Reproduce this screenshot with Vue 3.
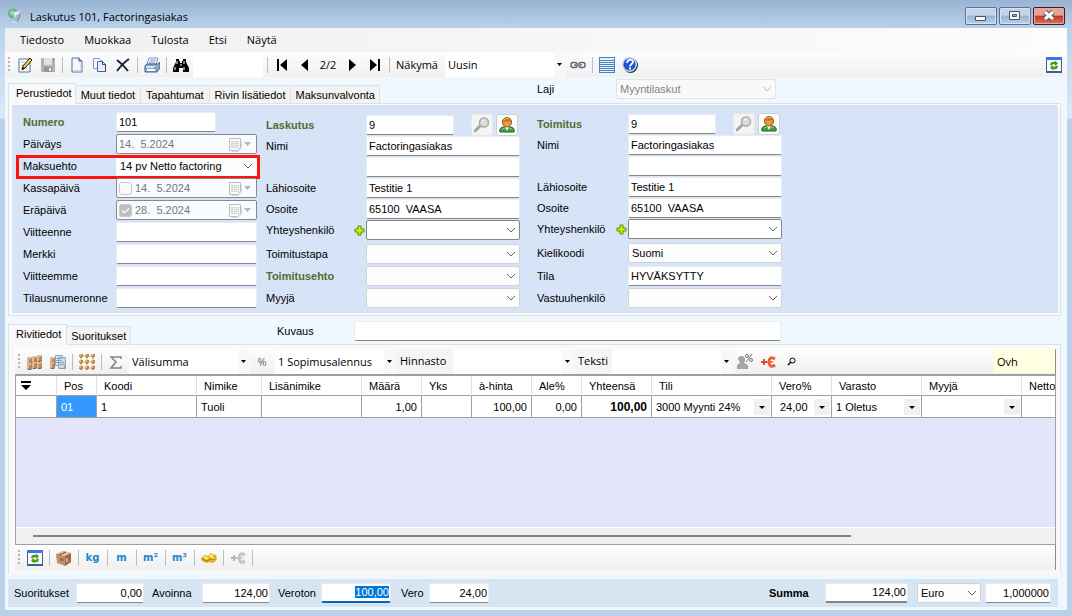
<script setup>
import { ref, onMounted } from 'vue'

const page = '<path d="M3 1h7l3 3v11H3z" fill="#f4f8fd" stroke="#55739b"/><path d="M10 1v3h3" fill="#c7d6ea" stroke="#2c4870"/><path d="M4 14h8V6" fill="none" stroke="#b9cbe3"/>'
const refresh = '<path d="M0 0h16v16H0z" fill="#3d5f94"/><path d="M0 0h16v3H0z" fill="#3c76e6"/><path d="M1 3h14v11H1z" fill="#f7fbff"/><path d="M4 8c0-3 3-4 5-3V3.500l3 3-3 2.500V7.500C7 7 6 7 6 8.500zM12 9c0 3-3 4-5 3v1.500l-3-3L7 8v1.500c2 .5 3 0 3-1z" fill="#4f9a08"/>'
const barrel = (x, y) => `<path d="M${x} ${y + 1}l2-1h2l1 1v5l-2 1h-2l-1-1z" fill="#b88762"/><path d="M${x} ${y + 1}l2-1h2v2h-2v4h-1l-1-1z" fill="#dfb992"/><path d="M${x + 1} ${y + 6}h3l1-1v1l-2 1h-2z" fill="#80604c"/>`
const knot = (x, y) => `<path d="M${x} ${y}h4v3h-1v1h-2v-1h-1z" fill="#b88864"/><path d="M${x} ${y}h2v2h-2z" fill="#e0b890"/>`
const icons = {
  app: '<path d="M1 3l5-3 4 2 1 5-3 4-5-1-2-3z" fill="#68b28d"/><path d="M2 4l4-2 2 3-3 3z" fill="#9cd4b5"/><path d="M7 4l7-1v6l-4 6-5-1 2-2z" fill="#e6ebef"/><path d="M9 7l4-1v3l-3 5-4-1z" fill="#a9b5bf"/><path d="M13 4v5l-3 5" fill="none" stroke="#6e7b85"/>',
  edit: '<path d="M2 2h11v13H2z" fill="#fff" stroke="#55739b"/><path d="M4 5h4M4 8h3M4 11h6" stroke="#9fb5d3"/><path d="M13 1l2 2-7 8-3 2 1-4z" fill="#ffd42a" stroke="#1a1a1a"/><path d="M5 13l1-3 2 1z" fill="#111"/>',
  save: '<path d="M1 1h14v14H2l-1-1z" fill="#b2b2b2"/><path d="M4 1h8v7H4z" fill="#e2e2e2"/><path d="M4 10h8v5H4z" fill="#939393"/><path d="M9 11h2v3H9z" fill="#ececec"/><path d="M13 2h1v1h-1z" fill="#777"/>',
  page,
  copy: '<path d="M1.500 1.500h6l3 3v7h-9z" fill="#f4f8fd" stroke="#7f97b8"/><path d="M5.500 4.500h5l3 3v7h-8z" fill="#e7eff9" stroke="#48658f"/><path d="M10.500 4.500v3h3v7" fill="none" stroke="#2c4870"/>',
  cross: '<path d="M2 3c4 3 8 7 11 11M14 2C9 5 5 10 2 14" fill="none" stroke="#1c1c48" stroke-width="2"/>',
  print: '<path d="M5 1h9l-2 6H3z" fill="#fff" stroke="#7d93b3"/><path d="M6 3h6M5 5h6" stroke="#6f95ce"/><path d="M3 7h11l2-2v6l-3 4H1V9z" fill="#8ca5c9" stroke="#435f8c"/><path d="M2 9h10v2H2z" fill="#d9e5f5"/><path d="M3 13h8" stroke="#fff" stroke-width="2"/><path d="M10 10h2v1h-2z" fill="#48a848"/>',
  binoc: '<path d="M3 2h3v2h1v2h2V4h1V2h3v3l3 6v4h-6v-4H6v4H0v-4l3-6z" fill="#000"/><path d="M4 4v3M2 10v3M11 4v3M11 10v3M7 8h2" stroke="#fff"/>',
  first: '<path d="M3 2h2v12H3zM13 2v12L6 8z" fill="#000"/>',
  prev: '<path d="M11 2v12L4 8z" fill="#000"/>',
  next: '<path d="M5 2v12l7-6z" fill="#000"/>',
  last: '<path d="M11 2h2v12h-2zM3 2v12l7-6z" fill="#000"/>',
  chain: '<rect x="1" y="5.500" width="6" height="5" rx="2" fill="none" stroke="#65656d" stroke-width="1.500"/><rect x="9" y="5.500" width="6" height="5" rx="2" fill="none" stroke="#65656d" stroke-width="1.500"/><path d="M4 8h8" stroke="#8b8b93" stroke-width="2"/>',
  list: '<path d="M0 0h16v16H0z" fill="#4c82bd"/><path d="M1 1h14v2H1zM1 4h14v1H1zM1 6h14v1H1zM1 8h14v1H1zM1 10h14v1H1zM1 12h14v1H1zM1 14h14v1H1z" fill="#e3f0fd"/>',
  help: '<circle cx="8.500" cy="8.500" r="7.500" fill="#333c58"/><circle cx="7.500" cy="7.500" r="7.500" fill="#c3d4f3"/><circle cx="7.500" cy="7.500" r="6" fill="#1f55c8"/><path d="M5 6c0-4 6-4 6-1 0 2-3 2-3 4.500" fill="none" stroke="#fff" stroke-width="1.800"/><path d="M7 10.500h2v2H7z" fill="#fff"/>',
  refresh,
  lens: '<path d="M1 14l6-6" stroke="#a5a5a5" stroke-width="3" stroke-linecap="round"/><circle cx="10" cy="5.500" r="4.500" fill="#dcdcdc" stroke="#a9a9a9" stroke-width="1.500"/><path d="M8 4c1-1 2-1 3-1" stroke="#fff" fill="none"/>',
  person: '<path d="M1 15c-1-3 1-5 4-5h6c3 0 5 2 4 5z" fill="#3f9f3c" stroke="#1f6428"/><path d="M3 12l3-1M13 12l-3-1" stroke="#86cf78"/><path d="M6 10l2 4 2-4z" fill="#fff"/><path d="M3.500 5c0-6 9-6 9 0 0 3-2 5-4.500 5S3.500 8 3.500 5z" fill="#ee9a3a" stroke="#8e5420"/><path d="M4 4c1-4 7-4 8 0-3 1-6 1-8 0z" fill="#c9701c"/><path d="M5 3c2-2 4-2 5-1" stroke="#f5bf7c" fill="none"/>',
  plus: '<path d="M4 1h3v3h3v3H7v3H4V7H1V4h3z" fill="#c5f500" stroke="#5d8b00"/>',
  barrels: barrel(10, 1) + barrel(5, 2) + barrel(0, 3) + barrel(10, 8) + barrel(5, 8) + barrel(0, 9),
  sheets: '<path d="M5.500 1.500h7v10h-7z" fill="#dce7ee" stroke="#8ba7b8"/><path d="M8.500 3.500h7v11h-7z" fill="#cbdbe5" stroke="#8ba7b8"/><path d="M6 4.500h6M6 6.500h6M6 8.500h8M9 10.500h6" stroke="#8ba7b8"/><path d="M12 14.500h3M14.500 12v3" stroke="#d86ad8"/>' + barrel(0, 3) + barrel(0, 8),
  network: '<path d="M2 2h12M2 8h12M2 14h12M2 2v12M8 2v12M14 2v12" stroke="#f0c414" fill="none"/>' + [0, 6, 12].map(y => [0, 6, 12].map(x => knot(x, y)).join('')).join(''),
  sigma: '<path d="M13 5V3H3l5 5-5 6h10v-2" fill="none" stroke="#828282" stroke-width="1.500"/>',
  discount: '<path d="M1 5c0-4 7-4 7 0v2L7 9l4 2v4H0v-4l3-2z" fill="#a5a5a5"/><circle cx="10" cy="2" r="1.500" fill="none" stroke="#777"/><circle cx="14" cy="6" r="1.500" fill="none" stroke="#777"/><path d="M15 0l-6 8" stroke="#777"/>',
  euro: '<path d="M1 8h6M4 5v6" stroke="#e04a24" stroke-width="2"/><path d="M15 5c-4-3-6 0-6 3s2 6 6 3" fill="none" stroke="#e8623c" stroke-width="3"/><path d="M7 8h6" stroke="#e8623c" stroke-width="1.500"/>',
  euroOff: '<path d="M1 8h6M4 5v6" stroke="#b5b5b5" stroke-width="2"/><path d="M15 5c-4-3-6 0-6 3s2 6 6 3" fill="none" stroke="#c4c4c4" stroke-width="3"/><path d="M7 8h6" stroke="#c4c4c4" stroke-width="1.500"/>',
  find: '<circle cx="9.500" cy="6.500" r="2.500" fill="none" stroke="#000"/><path d="M8 8l-3 3" stroke="#000" stroke-width="1.500"/>',
  box: '<path d="M0 4l7-3 8 2v9l-6 4-8-3z" fill="#c48f66"/><path d="M0 4l7-3 8 2-6 3z" fill="#e8c6a0"/><path d="M9 6l6-3v9l-6 4z" fill="#9c6a48"/><path d="M3 5l7-3M5 8v3M7 9v2" stroke="#6b4630"/><path d="M11 8v4" stroke="#f5e9d6"/>',
  coins: '<path d="M0 8l4-3 3 1 2-3 6 2 1 4-4 4-4-1-2 1-5-2z" fill="#e0ac1c"/><path d="M2 7l3-1 3 2-3 2zM8 4l5 1-1 3-4-1zM9 9l3-1 2 1-2 2z" fill="#ffe868"/><path d="M1 9l5 2 3-2 5 1" stroke="#a47c10" fill="none"/>',
  menu: '<path d="M3 3h10v2H3zM3 7h10l-5 5z" fill="#000"/>',
  calendar: '<path d="M.5 1.500h11v9l-3 3h-8z" fill="#fbfbfb" stroke="#bdbdbd"/><path d="M2 4h8v7H2z" fill="#cfcfcf"/><path d="M2 5.500h8M2 7.500h8M2 9.500h8M4.500 4v7M6.500 4v7M8.500 4v7" stroke="#f6f6f6" stroke-width=".6"/><path d="M12.500 4v7l-3 3.500H3" fill="none" stroke="#d8d8d8"/>'
}

const menus = ['Tiedosto', 'Muokkaa', 'Tulosta', 'Etsi', 'Näytä']
const mainTabs = ['Perustiedot', 'Muut tiedot', 'Tapahtumat', 'Rivin lisätiedot', 'Maksunvalvonta']
const tools = [
  ['edit', 'Muokkaa'], ['save', 'Tallenna'], null, ['page', 'Uusi'], ['copy', 'Kopioi'], ['cross', 'Poista'], null,
  ['print', 'Tulosta'], null, ['binoc', 'Etsi']
]

const columns = [
  {
    name: 'basic',
    fields: [
      { label: 'Numero', kind: 'text', value: '101', strong: true, short: true },
      { label: 'Päiväys', kind: 'date', value: '14.  5.2024' },
      { label: 'Maksuehto', kind: 'combo', value: '14 pv Netto factoring', marked: true },
      { label: 'Kassapäivä', kind: 'date', value: '14.  5.2024', check: true, checked: false },
      { label: 'Eräpäivä', kind: 'date', value: '28.  5.2024', check: true, checked: true },
      { label: 'Viitteenne', kind: 'text', value: '' },
      { label: 'Merkki', kind: 'text', value: '' },
      { label: 'Viitteemme', kind: 'text', value: '' },
      { label: 'Tilausnumeronne', kind: 'text', value: '' }
    ]
  },
  {
    name: 'billing',
    fields: [
      { label: 'Laskutus', kind: 'text', value: '9', strong: true, party: true },
      { label: 'Nimi', kind: 'text', value: 'Factoringasiakas' },
      { label: '', aria: 'Nimi 2', kind: 'text', value: '' },
      { label: 'Lähiosoite', kind: 'text', value: 'Testitie 1' },
      { label: 'Osoite', kind: 'text', value: '65100  VAASA' },
      { label: 'Yhteyshenkilö', kind: 'combo', value: '', add: true, dark: true },
      { label: 'Toimitustapa', kind: 'combo', value: '', lower: true },
      { label: 'Toimitusehto', kind: 'combo', value: '', strong: true },
      { label: 'Myyjä', kind: 'combo', value: '' }
    ]
  },
  {
    name: 'delivery',
    fields: [
      { label: 'Toimitus', kind: 'text', value: '9', strong: true, party: true },
      { label: 'Nimi', kind: 'text', value: 'Factoringasiakas' },
      { label: '', aria: 'Nimi 2', kind: 'text', value: '' },
      { label: 'Lähiosoite', kind: 'text', value: 'Testitie 1' },
      { label: 'Osoite', kind: 'text', value: '65100  VAASA' },
      { label: 'Yhteyshenkilö', kind: 'combo', value: '', add: true, dark: true },
      { label: 'Kielikoodi', kind: 'combo', value: 'Suomi', lower: true },
      { label: 'Tila', kind: 'text', value: 'HYVÄKSYTTY' },
      { label: 'Vastuuhenkilö', kind: 'combo', value: '' }
    ]
  }
]

const gridColumns = [
  { title: 'Pos', cls: 'w40', value: '01', selected: true },
  { title: 'Koodi', cls: 'w100', value: '1' },
  { title: 'Nimike', cls: 'w65', value: 'Tuoli' },
  { title: 'Lisänimike', cls: 'w100', value: '' },
  { title: 'Määrä', cls: 'w60', value: '1,00', right: true },
  { title: 'Yks', cls: 'w50', value: '' },
  { title: 'à-hinta', cls: 'w60', value: '100,00', right: true },
  { title: 'Ale%', cls: 'w50', value: '0,00', right: true },
  { title: 'Yhteensä', cls: 'w70', value: '100,00', right: true, bold: true },
  { title: 'Tili', cls: 'w120', value: '3000 Myynti 24%', drop: true },
  { title: 'Vero%', cls: 'w60', value: '24,00', drop: true, indent: true },
  { title: 'Varasto', cls: 'w90', value: '1 Oletus', drop: true },
  { title: 'Myyjä', cls: 'w100', value: '', drop: true },
  { title: 'Nettohinta', cls: 'rest', value: '' }
]

const units = [
  { icon: 'refresh', label: 'Päivitä' },
  { icon: 'box', label: 'Paketti' },
  { text: 'kg' },
  { text: 'm' },
  { text: 'm²' },
  { text: 'm³' },
  { icon: 'coins', label: 'Rahat' },
  { icon: 'euroOff', label: 'Lisää euro' }
]

const untaxed = ref(null)
onMounted(() => {
  untaxed.value.focus()
  untaxed.value.select()
})
</script>

<template>
  <div class="window">
    <header class="titlebar">
      <svg class="ico" viewBox="0 0 16 16" v-html="icons.app"></svg>
      <h1>Laskutus 101, Factoringasiakas</h1>
      <button class="wbtn" aria-label="Pienennä"><svg viewBox="0 0 30 16"><path d="M9.500 8.500h10v4h-10z" fill="#f8f8f8" stroke="#4a5462" /></svg></button>
      <button class="wbtn" aria-label="Suurenna"><svg viewBox="0 0 30 16"><path d="M9.500 3.500h10v8h-10z" fill="#f8f8f8" stroke="#4a5462" /><path d="M12.500 6.500h4v2h-4z" fill="#93aeca" stroke="#4a5462" /></svg></button>
      <button class="wbtn close" aria-label="Sulje"><svg viewBox="0 0 30 16"><path d="M11 4l8 7M19 4l-8 7" stroke="#53474b" stroke-width="5" /><path d="M11 4l8 7M19 4l-8 7" stroke="#fff" stroke-width="3" /></svg></button>
    </header>

    <main class="body">
      <nav class="menubar">
        <button v-for="m in menus" :key="m">{{ m }}</button>
      </nav>

      <div class="toolbar top">
        <i class="grip"></i>
        <template v-for="(t, i) in tools" :key="i">
          <button v-if="t" class="tool" :aria-label="t[1]"><svg class="ico" viewBox="0 0 16 16" v-html="icons[t[0]]"></svg></button>
          <i v-else class="sep"></i>
        </template>
        <input class="quick" aria-label="Hakusana">
        <i class="sep"></i>
        <button class="tool" aria-label="Ensimmäinen"><svg class="ico" viewBox="0 0 16 16" v-html="icons.first"></svg></button>
        <button class="tool" aria-label="Edellinen"><svg class="ico" viewBox="0 0 16 16" v-html="icons.prev"></svg></button>
        <span class="count">2/2</span>
        <button class="tool" aria-label="Seuraava"><svg class="ico" viewBox="0 0 16 16" v-html="icons.next"></svg></button>
        <button class="tool" aria-label="Viimeinen"><svg class="ico" viewBox="0 0 16 16" v-html="icons.last"></svg></button>
        <i class="sep"></i>
        <label class="view" for="view">Näkymä</label>
        <span class="flat">
          <select id="view"><option>Uusin</option></select>
          <svg class="tri" viewBox="0 0 5 3"><path d="M0 0h5L2.500 3z" /></svg>
        </span>
        <button class="tool" aria-label="Linkki"><svg class="ico" viewBox="0 0 16 16" v-html="icons.chain"></svg></button>
        <i class="sep"></i>
        <button class="tool" aria-label="Luettelo"><svg class="ico" viewBox="0 0 16 16" v-html="icons.list"></svg></button>
        <button class="tool" aria-label="Ohje"><svg class="ico" viewBox="0 0 16 16" v-html="icons.help"></svg></button>
        <button class="tool end" aria-label="Päivitä"><svg class="ico" viewBox="0 0 16 16" v-html="icons.refresh"></svg></button>
      </div>

      <div class="tabrow">
        <div class="tabs" role="tablist">
          <button v-for="(t, i) in mainTabs" :key="t" role="tab" :class="{ on: i === 0 }">{{ t }}</button>
        </div>
        <div class="aside kind">
          <label for="kind">Laji</label>
          <span class="combo off">
            <select id="kind" disabled><option>Myyntilaskut</option></select>
            <svg class="chev" viewBox="0 0 10 6"><path d="M1 1l4 4 4-4" /></svg>
          </span>
        </div>
      </div>

      <section class="pane">
        <form class="form" @submit.prevent>
          <div v-for="c in columns" :key="c.name" class="col" :class="c.name">
            <div v-for="(f, i) in c.fields" :key="i" class="row" :class="{ marked: f.marked, lower: f.lower }">
              <label :for="c.name + i" :class="{ strong: f.strong }">{{ f.label }}</label>
              <button v-if="f.add" class="add" aria-label="Lisää yhteyshenkilö"><svg viewBox="0 0 11 11" v-html="icons.plus"></svg></button>

              <span v-if="f.kind === 'combo'" class="combo" :class="{ dark: f.dark }">
                <select :id="c.name + i"><option>{{ f.value }}</option></select>
                <svg class="chev" viewBox="0 0 10 6"><path d="M1 1l4 4 4-4" /></svg>
              </span>
              <span v-else-if="f.kind === 'date'" class="date">
                <span v-if="f.check" class="tick">
                  <input type="checkbox" disabled :checked="f.checked" :aria-label="f.label + ' käytössä'">
                  <svg v-if="f.checked" viewBox="0 0 13 13"><path d="M3 6.500l2.500 2.500L10 4.500" fill="none" stroke="#fff" stroke-width="1.200" /></svg>
                </span>
                <input :id="c.name + i" type="text" disabled :value="f.value">
                <svg class="cal" viewBox="0 0 13 15" v-html="icons.calendar"></svg>
                <svg class="drop" viewBox="0 0 7 4"><path d="M0 0h7L3.500 4z" /></svg>
              </span>
              <span v-else-if="f.party" class="party">
                <input :id="c.name + i" class="box" type="text" :value="f.value">
                <button class="sq dim" aria-label="Hae"><svg viewBox="0 0 16 16" v-html="icons.lens"></svg></button>
                <button class="sq" aria-label="Asiakas"><svg viewBox="0 0 16 16" v-html="icons.person"></svg></button>
              </span>
              <input v-else :id="c.name + i" class="box" :class="{ short: f.short }" type="text" :value="f.value" :aria-label="f.aria || f.label">
            </div>
          </div>
        </form>
      </section>

      <div class="tabrow second">
        <div class="tabs" role="tablist">
          <button role="tab" class="on">Rivitiedot</button>
          <button role="tab">Suoritukset</button>
        </div>
        <div class="aside desc">
          <label for="desc">Kuvaus</label>
          <input id="desc" class="box" type="text">
        </div>
      </div>

      <section class="pane lines">
        <div class="toolbar inner">
          <i class="grip"></i>
          <button class="tool" aria-label="Tuotteet"><svg class="ico" viewBox="0 0 16 16" v-html="icons.barrels"></svg></button>
          <button class="tool" aria-label="Tuotelista"><svg class="ico" viewBox="0 0 16 16" v-html="icons.sheets"></svg></button>
          <i class="sep"></i>
          <button class="tool" aria-label="Rakenne"><svg class="ico" viewBox="0 0 16 16" v-html="icons.network"></svg></button>
          <i class="sep"></i>
          <button class="tool" aria-label="Summa"><svg class="ico" viewBox="0 0 16 16" v-html="icons.sigma"></svg></button>
          <span class="flat">
            <select aria-label="Välisumma"><option>Välisumma</option></select>
            <svg class="tri" viewBox="0 0 5 3"><path d="M0 0h5L2.500 3z" /></svg>
          </span>
          <label class="pct" for="disc">%</label>
          <span class="flat">
            <select id="disc"><option>1 Sopimusalennus</option></select>
            <svg class="tri" viewBox="0 0 5 3"><path d="M0 0h5L2.500 3z" /></svg>
          </span>
          <label class="tag wide" for="prices">Hinnasto</label>
          <span class="flat">
            <select id="prices"><option></option></select>
            <svg class="tri" viewBox="0 0 5 3"><path d="M0 0h5L2.500 3z" /></svg>
          </span>
          <label class="tag" for="note">Teksti</label>
          <span class="flat">
            <select id="note"><option></option></select>
            <svg class="tri" viewBox="0 0 5 3"><path d="M0 0h5L2.500 3z" /></svg>
          </span>
          <button class="tool" aria-label="Asiakasalennus"><svg class="ico" viewBox="0 0 16 16" v-html="icons.discount"></svg></button>
          <button class="tool" aria-label="Lisää euro"><svg class="ico" viewBox="0 0 16 16" v-html="icons.euro"></svg></button>
          <button class="tool" aria-label="Haku"><svg class="ico" viewBox="0 0 16 16" v-html="icons.find"></svg></button>
          <span class="ovh">Ovh</span>
        </div>

        <div class="gridbox">
          <table>
            <thead>
              <tr>
                <th class="w41"><svg class="gm" viewBox="0 0 16 16" v-html="icons.menu"></svg></th>
                <th v-for="g in gridColumns" :key="g.title" :class="g.cls">{{ g.title }}</th>
              </tr>
            </thead>
            <tbody>
              <tr>
                <td></td>
                <td v-for="g in gridColumns" :key="g.title" :class="{ right: g.right, bold: g.bold, sel: g.selected }">
                  <span v-if="g.drop" class="cellcombo" :class="{ indent: g.indent }">
                    <select :aria-label="g.title"><option>{{ g.value }}</option></select>
                    <svg class="arrow" viewBox="0 0 16 16"><path d="M5 7h6l-3 3z" /></svg>
                  </span>
                  <template v-else>{{ g.value }}</template>
                </td>
              </tr>
            </tbody>
          </table>
          <div class="scroll"><div class="thumb"></div></div>
        </div>

        <div class="toolbar inner unit">
          <i class="grip"></i>
          <template v-for="(u, i) in units" :key="i">
            <button class="tool" :aria-label="u.label || u.text">
              <svg v-if="u.icon" class="ico" viewBox="0 0 16 16" v-html="icons[u.icon]"></svg>
              <b v-else>{{ u.text }}</b>
            </button>
            <i class="sep"></i>
          </template>
        </div>
      </section>

      <footer class="totals">
        <label class="t1" for="paid">Suoritukset</label><input id="paid" class="box num" value="0,00">
        <label class="t2" for="open">Avoinna</label><input id="open" class="box num" value="124,00">
        <label class="t3" for="untaxed">Veroton</label><input id="untaxed" ref="untaxed" class="box num active" value="100,00">
        <label class="t4" for="tax">Vero</label><input id="tax" class="box num small" value="24,00">
        <label class="sum" for="sum">Summa</label><input id="sum" class="box num big" value="124,00">
        <span class="combo money">
          <select aria-label="Valuutta"><option>Euro</option></select>
          <svg class="chev" viewBox="0 0 10 6"><path d="M1 1l4 4 4-4" /></svg>
        </span>
        <input class="box num rate" aria-label="Kurssi" value="1,000000">
      </footer>
    </main>
  </div>
</template>

<style>
body { margin: 0; }
</style>

<style scoped>
* { box-sizing: border-box; }
.window {
  min-height: 100vh;
  display: flex;
  flex-direction: column;
  padding: 0 5px 6px;
  background: linear-gradient(#98b4d2 0, #bad1eb 28px, #dce8f6 118px, #b9d1ea 119px);
  font: 11px/14px "Liberation Sans", Arial, sans-serif;
  color: #000;
}
button, input, select { font: inherit; color: inherit; border: 0; padding: 0; margin: 0; background: none; outline: 0; min-width: 0; border-radius: 0; }
select { appearance: none; opacity: 1; }
svg { display: block; }
.ico { width: 16px; height: 16px; }

.titlebar { height: 28px; display: flex; align-items: center; gap: 2px; padding: 4px 2px 0; }
.titlebar h1 { flex: 1; margin: 0 0 0 5px; padding-top: 1px; font: 11px/16px "Open Sans", "Noto Sans", sans-serif; }
.wbtn { width: 32px; height: 18px; border: 1px solid #5b7290; border-radius: 2px; background: linear-gradient(#c2d5ea 45%, #9ab4d0 50%, #b8d0ea); box-shadow: inset 0 0 0 1px #d5e4f4; }
.wbtn svg { width: 30px; height: 16px; }
.wbtn.close { border-color: #4b1420; background: linear-gradient(#e6a296 45%, #b83c25 50%, #d8755c); box-shadow: inset 0 0 0 1px #e7aaa0; }

.body { flex: 1; display: flex; flex-direction: column; background: #f0f8ff; }
.menubar { height: 24px; display: flex; gap: 20px; padding-left: 15px; background: linear-gradient(90deg, #f0f0f0, #fcfcfc); font: 11px/16px "Open Sans", "Noto Sans", sans-serif; }
.toolbar { height: 25px; display: flex; align-items: center; background: linear-gradient(#fdfdfd, #f0f0f0); font: 11px/16px "Open Sans", "Noto Sans", sans-serif; }
.grip { width: 2px; height: 15px; margin: 0 3px; background: repeating-linear-gradient(#b5b5b5 0 2px, transparent 2px 4px); }
.tool { flex: none; width: 23px; height: 23px; display: grid; place-items: center; }
.tool.end { margin-left: auto; margin-right: 2px; }
.sep { flex: none; width: 1px; height: 16px; margin: 0 2px 0 3px; background: #bdbdbd; }
.quick { width: 70px; height: 24px; margin: 0 1px; background: #fff; }
.count { width: 24px; text-align: center; }
.view { width: 53px; padding-left: 4px; }
.flat { flex: none; display: grid; width: 121px; height: 24px; background: linear-gradient(90deg, #fff 109px, #f8f8f8 109px); align-items: center; }
.flat > *, .combo > *, .cellcombo > *, .tick > * { grid-area: 1 / 1; }
.flat select { padding-left: 3px; }
.tri { width: 5px; height: 3px; justify-self: end; margin-right: 4px; pointer-events: none; }

.tabrow { display: flex; height: 26px; padding-left: 3px; align-items: end; }
.tabs { display: flex; align-items: end; }
.tabs button { height: 18px; padding: 0 5px; border: 1px solid #e0e0e0; border-width: 1px 1px 0 0; background: #f3f3f3; }
.tabs button.on { height: 21px; margin-bottom: -1px; padding: 0 3px 2px 7px; border-left-width: 1px; background: #f9f9f9; position: relative; }
.tabs button:last-child { padding: 0 4px; }
.aside { display: flex; position: absolute; left: 537px; align-items: center; }
.kind { top: 79px; }
.kind label { width: 79px; }
.kind .combo { width: 160px; }
.second { height: 28px; position: relative; }
.second .tabs button.on { padding-right: 5px; }
.desc { top: 5px; left: 272px; }
.desc label { width: 77px; }
.desc .box { width: 427px; }

.pane { margin: 0 6px 0 3px; padding: 1px 2px 2px 3px; border: 1px solid #e0e0e0; background: #f9f9f9; }
.form { display: flex; background: #d7e4f7; padding: 7px 11px 5px; }
.col { display: flex; flex-direction: column; gap: 1px; flex: none; }
.basic { width: 234px; gap: 2px; }
.billing { width: 254px; margin: 3px 0 0 9px; }
.delivery { width: 245px; margin: 2px 0 0 17px; }
.row { display: flex; align-items: center; height: 20px; position: relative; }
.billing .row > label { flex: 1; }
.delivery .row > label { flex: 1; }
.basic .row > label { width: 93px; }
.row.lower { margin-top: 3px; }
.row.lower ~ .row { margin-top: 1px; }
.delivery .row.lower + .row { margin-top: 2px; }
.row.marked::after { content: ""; position: absolute; inset: -1px -3px -3px -7px; border: 3px solid #fb1310; pointer-events: none; }
.strong { color: #556b2f; font-weight: bold; }
.box { height: 20px; border: 1px solid #e9edf2; border-bottom-color: #868686; border-radius: 2px; background: #fff; padding: 0 2px 1px; white-space: pre; }
.billing .box, .delivery .box { width: 154px; }
.basic .box { width: 141px; }
.basic .box.short { width: 100px; }
.row .party { width: 154px; display: flex; align-items: center; gap: 3px; padding-right: 2px; }
.row .party .box { width: 88px; margin-right: auto; }
.sq { width: 22px; height: 22px; border: 1px solid #d0d0d0; border-radius: 3px; background: #fdfdfd; display: grid; place-items: center; flex: none; }
.sq.dim { background: #f4f4f4; border-color: #e8e8e8; }
.sq svg { width: 16px; height: 16px; }
.add { width: 12px; height: 12px; flex: none; }
.add svg { width: 11px; height: 11px; }

.combo { display: grid; align-items: center; width: 154px; height: 20px; border: 1px solid #d3d3d3; border-radius: 2px; background: #fdfdfd; }
.combo select { height: 18px; padding-left: 3px; width: 100%; }
.basic .combo { width: 141px; border-color: #fdfdfd; }
.combo.dark { border-color: #868686; background: #fff; }
.combo.off { color: #838383; background: #f9f9f9; border-color: #e5e5e5; }
.chev { width: 10px; height: 6px; justify-self: end; margin-right: 3px; pointer-events: none; fill: none; stroke: #666; }
.off .chev { stroke: #b8b8b8; }

.date { display: flex; align-items: center; width: 141px; height: 20px; border: 1px solid #8a8a8a; border-radius: 2px; background: #f8fbff; color: #777; padding: 0 5px 0 2px; }
.date input[type="text"] { flex: 1; white-space: pre; }
.tick { display: grid; margin-right: 3px; }
.tick input { appearance: none; width: 13px; height: 13px; border: 1px solid #c8c8c8; border-radius: 3px; background: #fafafa; }
.tick input:checked { background: #bfbfbf; }
.tick svg { width: 13px; height: 13px; }
.cal { width: 13px; height: 15px; margin-right: 2px; }
.drop { width: 7px; height: 4px; fill: #b5b5b5; }

.lines { flex: 1; display: flex; flex-direction: column; padding: 4px 4px 3px 6px; border-bottom: 0; }
.inner { border-right: 1px solid #8c8c8c; }
.inner .flat { margin-left: 1px; }
.inner .tool + .flat { margin-left: 2px; }
.inner .tag + .flat { margin-left: 0; }
.pct { width: 24px; text-align: center; color: #666; }
.tag { padding-left: 4px; width: 38px; align-self: stretch; line-height: 24px; background: #f5f5f5; }
.tag.wide { width: 57px; }
.ovh { margin-left: auto; width: 61px; height: 23px; padding-left: 3px; line-height: 23px; background: #ffffe1; }

.gridbox { flex: 1; display: flex; flex-direction: column; min-height: 120px; border: 1px solid #a0a0a0; border-top-width: 2px; background: #e4e4fa; overflow: hidden; }
table { width: 100%; table-layout: fixed; border-collapse: separate; border-spacing: 0; background: #fff; }
th { height: 20px; padding: 0 0 0 7px; text-align: left; font-weight: normal; border-right: 1px solid #e2e2e2; border-bottom: 1px solid #a0a0a0; white-space: nowrap; overflow: hidden; }
td { height: 22px; padding: 0 4px; border-right: 1px solid #a0a0a0; border-bottom: 1px solid #a0a0a0; white-space: nowrap; overflow: hidden; }
th.w41 { width: 41px; padding-left: 2px; }
.gm { width: 16px; height: 16px; }
.w40 { width: 40px; } .w50 { width: 50px; } .w60 { width: 60px; } .w65 { width: 65px; }
.w70 { width: 70px; } .w90 { width: 90px; } .w100 { width: 100px; } .w120 { width: 120px; }
th:last-child, td:last-child { border-right: 0; }
.right { text-align: right; }
.bold { font-weight: bold; font-size: 12px; }
.sel { background: #3399ff; color: #fff; }
.cellcombo { display: grid; align-items: center; }
.cellcombo.indent { padding-left: 4px; }
.arrow { width: 16px; height: 16px; justify-self: end; margin-right: -3px; background: #f0f0f0; pointer-events: none; }
.scroll { height: 17px; margin-top: auto; border-top: 1px solid #fff; background: #f0f0f0; padding: 7px 204px 0 17px; }
.thumb { height: 2px; background: #858585; }
.unit b { font: bold 10px/16px "DejaVu Sans", sans-serif; color: #2388cc; }

.totals { display: flex; align-items: center; height: 28px; margin: 6px 9px 3px 3px; padding: 0 7px 1px 6px; background: #d7e4f2; }
.t1 { width: 62px; } .t2 { width: 50px; } .t3 { width: 43px; } .t4 { width: 28px; }
.num { width: 68px; text-align: right; padding: 0 1px 0 2px; margin-right: 8px; }
.num.active { width: 70px; margin-right: 10px; border-bottom: 2px solid #0067c0; padding-bottom: 0; }
.num::selection { background: #0078d7; color: #fff; }
.num.small { width: 60px; margin-right: auto; }
.sum { width: 56px; font-weight: bold; }
.num.big { width: 83px; border-bottom-width: 2px; margin-right: 9px; }
.money { width: 64px; margin-right: 4px; }
.num.rate { width: 66px; margin-right: 0; }
</style>
